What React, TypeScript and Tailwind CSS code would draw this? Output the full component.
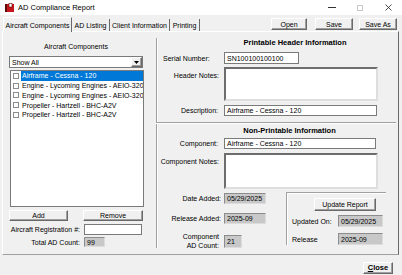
import React from "react";

const btn =
  "flex items-center justify-center bg-[#f0f0f0] border border-t-white border-l-white border-r-[#696969] border-b-[#696969] shadow-[inset_-1px_-1px_0_#a0a0a0]";
const field =
  "bg-white border border-[#7a7a7a] flex items-center pl-[2px] whitespace-nowrap overflow-hidden";
const roField =
  "bg-[#c8c8c8] border border-t-[#8c8c8c] border-l-[#8c8c8c] border-r-[#dcdcdc] border-b-[#dcdcdc] flex items-center pl-[2px] whitespace-nowrap";
const memo =
  "bg-white border-2 border-t-[#6d6d6d] border-l-[#6d6d6d] border-r-[#dedede] border-b-[#dedede]";

const components = [
  "Airframe - Cessna - 120",
  "Engine - Lycoming Engines - AEIO-320-D1B",
  "Engine - Lycoming Engines - AEIO-320-D1B",
  "Propeller - Hartzell - BHC-A2V",
  "Propeller - Hartzell - BHC-A2V",
];

const AppIcon = () => (
  <svg width="9" height="9" viewBox="0 0 9 9" className="ml-[5px]">
    <rect x="0" y="1" width="9" height="8" fill="#c4161c" />
    <rect x="0" y="1" width="2" height="8" fill="#5c0b0b" />
    <rect x="4" y="0.5" width="3" height="3.5" fill="#fff" stroke="#5c0b0b" strokeWidth="0.6" />
  </svg>
);

export default function App() {
  return (
    <div className="w-[402px] h-[275px] overflow-hidden bg-[#f0f0f0] text-[7px] leading-none text-black font-['Liberation_Sans',Arial,sans-serif] flex flex-col">
      {/* title bar */}
      <div className="h-[15px] bg-white flex items-center">
        <AppIcon />
        <span className="ml-[4px] text-[7.5px]">AD Compliance Report</span>
        <div className="ml-auto flex items-center h-full">
          <div className="w-[28px] flex justify-center">
            <div className="w-[8px] h-px bg-[#333]" />
          </div>
          <div className="w-[28px] flex justify-center">
            <div className="w-[6px] h-[6px] border border-[#c8c8c8]" />
          </div>
          <div className="w-[28px] flex justify-center">
            <svg width="7" height="7" viewBox="0 0 7 7">
              <path d="M0.5 0.5 L6.5 6.5 M6.5 0.5 L0.5 6.5" stroke="#222" strokeWidth="0.8" />
            </svg>
          </div>
        </div>
      </div>

      {/* tabs + file buttons */}
      <div className="h-[16px] flex items-end pl-[3px]">
        <div className="relative z-10 mb-[-1px] h-[15px] w-[69px] flex items-center justify-center bg-[#f0f0f0] border-t border-l border-t-white border-l-white border-r border-r-[#696969]">
          Aircraft Components
        </div>
        <div className="h-[12px] w-[38px] flex items-center justify-center border-r border-r-[#696969]">
          AD Listing
        </div>
        <div className="h-[12px] w-[60px] flex items-center justify-center border-r border-r-[#696969]">
          Client Information
        </div>
        <div className="h-[12px] w-[30px] flex items-center justify-center border-r border-r-[#696969]">
          Printing
        </div>
        <div className="ml-auto self-start mt-[3px] mr-[5px] flex">
          <div className={`${btn} w-[36px] h-[12px]`}>Open</div>
          <div className={`${btn} ml-[8px] w-[38px] h-[12px]`}>Save</div>
          <div className={`${btn} ml-[6px] w-[38px] h-[12px]`}>Save As</div>
        </div>
      </div>

      {/* tab page */}
      <div className="ml-[2px] w-[397px] h-[224px] border border-t-white border-l-white border-r-[#696969] border-b-[#a0a0a0] flex">
        {/* left column */}
        <div className="w-[153px] flex flex-col pl-[6px] pt-[11px]">
          <div className="w-[134px] h-[8px] leading-[8px] text-center">Aircraft Components</div>
          <div className={`${field} mt-[5px] w-[134px] h-[12px] pr-0`}>
            <span className="flex-1">Show All</span>
            <div className={`${btn} w-[11px] h-[10px]`}>
              <svg width="5" height="3" viewBox="0 0 5 3">
                <path d="M0 0 H5 L2.5 3 Z" fill="#000" />
              </svg>
            </div>
          </div>
          <div className="mt-[2px] ml-[1px] w-[134px] h-[137px] bg-white border border-[#7a7a7a] overflow-hidden">
            {components.map((c, i) => (
              <div key={i} className="h-[9.75px] flex items-center whitespace-nowrap">
                <div className="ml-[2px] w-[6px] h-[6px] border border-[#8c8c8c] bg-white shrink-0" />
                <div
                  className={
                    i === 0
                      ? "ml-[2px] pl-px flex-1 h-full flex items-center bg-[#0078d7] text-white"
                      : "ml-[2px] pl-px flex-1 h-full flex items-center"
                  }
                >
                  {c}
                </div>
              </div>
            ))}
          </div>
          <div className="mt-[3px] flex">
            <div className={`${btn} w-[59px] h-[11px]`}>Add</div>
            <div className={`${btn} ml-[15px] w-[60px] h-[11px]`}>Remove</div>
          </div>
          <div className="mt-[3px] flex items-center">
            <span className="w-[71px] text-right">Aircraft Registration #:</span>
            <div className={`${field} ml-[4px] w-[58px] h-[11px]`} />
          </div>
          <div className="mt-[2px] flex items-center">
            <span className="w-[71px] text-right">Total AD Count:</span>
            <div className={`${roField} ml-[4px] w-[21px] h-[10px]`}>99</div>
          </div>
        </div>

        {/* separator */}
        <div className="mt-[6px] mb-[6px] w-[2px] border-l border-l-[#a0a0a0] border-r border-r-white" />

        {/* right column */}
        <div className="flex-1 flex flex-col pt-[7px]">
          <div className="h-[8px] leading-[8px] pl-[34px] text-center text-[7.5px] font-bold">
            Printable Header Information
          </div>
          <div className="mt-[5px] flex items-center">
            <span className="w-[66px] pl-[5px]">Serial Number:</span>
            <div className={`${field} w-[75px] h-[12px]`}>SN100100100100</div>
          </div>
          <div className="mt-[3px] flex">
            <span className="w-[66px] pr-[5px] pt-[5px] text-right">Header Notes:</span>
            <div className={`${memo} w-[154px] h-[34px]`} />
          </div>
          <div className="mt-[4px] flex items-center">
            <span className="w-[66px] pr-[6px] text-right">Description:</span>
            <div className={`${field} w-[153px] h-[11px]`}>Airframe - Cessna - 120</div>
          </div>
          <div className="mt-[6px] ml-[-2px] mr-[2px] h-[2px] border-t border-t-[#a0a0a0] border-b border-b-white" />
          <div className="mt-[3px] h-[8px] leading-[8px] pl-[23px] text-center text-[7.5px] font-bold">
            Non-Printable Information
          </div>
          <div className="mt-[3px] flex items-center">
            <span className="w-[66px] pr-[6px] text-right">Component:</span>
            <div className={`${field} w-[152px] h-[11px] bg-[#f7fbff]`}>Airframe - Cessna - 120</div>
          </div>
          <div className="mt-[4px] flex">
            <span className="w-[66px] pr-[5px] pt-[5px] text-right">Component Notes:</span>
            <div className={`${memo} w-[154px] h-[36px]`} />
          </div>

          {/* dates + update group */}
          <div className="mt-[3px] flex">
            <div className="w-[128px] flex flex-col">
              <div className="mt-[1px] flex items-center">
                <span className="w-[66px] pr-[3px] text-right">Date Added:</span>
                <div className={`${roField} w-[42px] h-[11px]`}>05/29/2025</div>
              </div>
              <div className="mt-[9px] flex items-center">
                <span className="w-[66px] pr-[3px] text-right">Release Added:</span>
                <div className={`${roField} w-[42px] h-[11px]`}>2025-09</div>
              </div>
              <div className="mt-[8px] flex items-center">
                <span className="w-[66px] pr-[5px] text-right leading-[9px]">
                  Component
                  <br />
                  AD Count:
                </span>
                <div className={`${roField} w-[18px] h-[13px]`}>21</div>
              </div>
            </div>
            <div className="w-[100px] h-[53px] flex flex-col border-t border-l border-t-[#a0a0a0] border-l-[#a0a0a0] shadow-[inset_1px_1px_0_white]">
              <div className={`${btn} mt-[5px] ml-[27px] w-[62px] h-[13px]`}>Update Report</div>
              <div className="mt-[4px] flex items-center">
                <span className="w-[51px] pl-[5px]">Updated On:</span>
                <div className={`${roField} w-[45px] h-[12px]`}>05/29/2025</div>
              </div>
              <div className="mt-[6px] flex items-center">
                <span className="w-[51px] pl-[5px]">Release</span>
                <div className={`${roField} w-[45px] h-[12px]`}>2025-09</div>
              </div>
            </div>
          </div>
        </div>
      </div>

      {/* footer */}
      <div className="flex-1 flex justify-end items-start">
        <div className={`${btn} mt-[7px] mr-[9px] w-[30px] h-[12px] font-bold text-[7.5px]`}>
          <span>
            <span className="underline">C</span>lose
          </span>
        </div>
      </div>
    </div>
  );
}
